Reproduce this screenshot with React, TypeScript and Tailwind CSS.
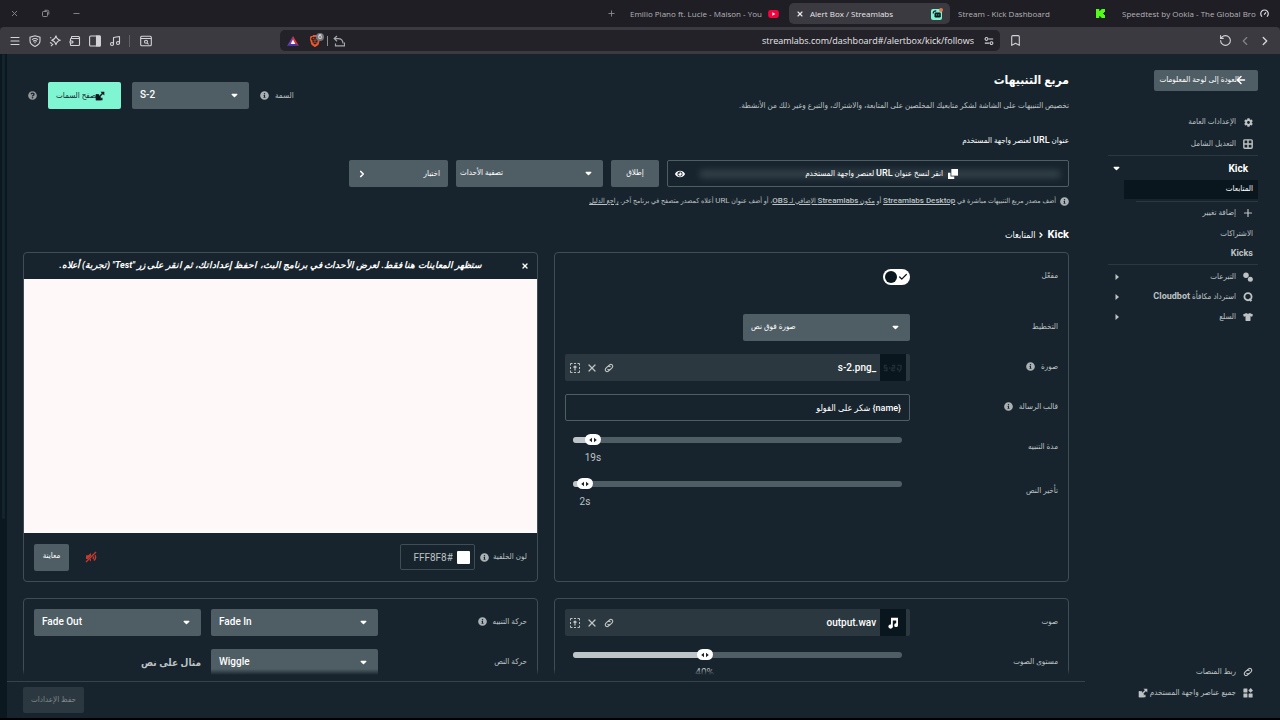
import React, { useState } from "react";
import {
  ArrowLeft, Bookmark, Check, ChevronLeft, ChevronRight, Menu, Minus, Music,
  Plus, RotateCcw, Wallet, X,
} from "lucide-react";
import { FaCog, FaEye, FaInfoCircle, FaQuestionCircle, FaTshirt } from "react-icons/fa";
import { SiBrave } from "react-icons/si";

type SvgProps = { className?: string };

const Caret = ({ className = "" }: SvgProps) => (
  <svg viewBox="0 0 8 6" aria-hidden="true" className={`h-[5px] w-[7px] ${className}`} fill="currentColor">
    <path d="M1 1h6a.6.6 0 0 1 .4 1L4.6 4.9a.8.8 0 0 1-1.2 0L.6 2A.6.6 0 0 1 1 1z" />
  </svg>
);

const External = ({ className = "" }: SvgProps) => (
  <svg viewBox="0 0 12 12" aria-hidden="true" className={className} fill="none" stroke="currentColor">
    <path d="M1 4h4v2.5h2V11H1z" fill="currentColor" stroke="none" />
    <path d="M1.8 4v6.2h6.4V8" strokeWidth="1.6" />
    <path d="M4.8 7.2 9.6 2.4" strokeWidth="1.8" />
    <path d="M6.5.8H11.2V5.5z" fill="currentColor" stroke="none" />
  </svg>
);

const LinkIcon = ({ className = "" }: SvgProps) => (
  <svg viewBox="0 0 24 24" aria-hidden="true" className={className} fill="none" stroke="currentColor" strokeWidth="2.8" strokeLinecap="round">
    <path d="M10.5 7.5 14 4a4.6 4.6 0 0 1 6.3 6.3l-4.8 4.8a4.4 4.4 0 0 1-6.2 0" />
    <path d="M13.5 16.5 10 20a4.6 4.6 0 0 1-6.3-6.3l4.8-4.8a4.4 4.4 0 0 1 6.2 0" />
  </svg>
);

const UploadIcon = () => (
  <svg viewBox="0 0 12 12" aria-hidden="true" className="size-3" fill="none" stroke="currentColor">
    <path d="M1.5 3.5v-2h2M5 1.500h2M8.500 1.500h2v2M10.500 5v2M10.500 8.500v2h-2M7 10.500H5M3.500 10.500h-2v-2M1.500 7V5" />
    <path d="M6 8.500V4M4.500 5.500 6 4l1.500 1.500" strokeWidth="1.2" />
  </svg>
);

const NoteIcon = () => (
  <svg viewBox="0 0 12 12" aria-hidden="true" className="size-3" fill="currentColor">
    <path d="M4 .8h7v7.4a1.9 1.9 0 1 1-1.8-1.9V3.6H5.8v6A1.9 1.9 0 1 1 4 7.7z" />
    <circle cx="3.4" cy="9.5" r="2" />
  </svg>
);

const GridIcon = () => (
  <svg viewBox="0 0 12 12" aria-hidden="true" className="size-[10px]" fill="none" stroke="currentColor" strokeWidth="1.7">
    <rect x="1" y="1" width="10" height="10" rx="1" />
    <path d="M6 1v10M1 6h10" />
  </svg>
);

const CoinsIcon = () => (
  <svg viewBox="0 0 12 12" aria-hidden="true" className="size-[10px]" fill="currentColor">
    <circle cx="3.6" cy="3.8" r="3.3" />
    <circle cx="8.8" cy="8.6" r="3" />
  </svg>
);

const BotIcon = () => (
  <svg viewBox="0 0 12 12" aria-hidden="true" className="size-[10px]" fill="none" stroke="currentColor" strokeWidth="2.2">
    <circle cx="6" cy="5.6" r="4.3" />
    <path d="M7.5 8 10 11" strokeWidth="2.6" />
  </svg>
);

const WidgetsIcon = () => (
  <svg viewBox="0 0 12 12" aria-hidden="true" className="size-[10px]" fill="currentColor">
    <rect x=".5" y=".5" width="4.8" height="4.8" rx=".6" />
    <path d="M9.2 0 12 2.9 9.2 5.8 6.4 2.9z" />
    <rect x=".5" y="6.7" width="4.8" height="4.8" rx=".6" />
    <rect x="6.7" y="6.7" width="4.8" height="4.8" rx=".6" />
  </svg>
);

const Info = () => <FaInfoCircle aria-hidden="true" className="size-[9px] shrink-0 text-[#a9b1b5]" />;

function Select({ label, options, className }: { label: string; options: string[]; className: string }) {
  return (
    <div dir="ltr" className={`grid h-[27px] items-center ${className}`}>
      <select
        aria-label={label}
        className="col-start-1 row-start-1 h-[27px] w-full appearance-none rounded-[2px] bg-[#4f5e65] pb-[2px] pl-2 pr-5 text-left text-[10px] font-medium text-white"
      >
        {options.map((o) => <option key={o}>{o}</option>)}
      </select>
      <Caret className="pointer-events-none col-start-1 row-start-1 mr-[11px] justify-self-end text-white" />
    </div>
  );
}

function Slider({ id, initial, max, unit }: { id: string; initial: number; max: number; unit: string }) {
  const [value, setValue] = useState(initial);
  const pct = (value / max) * 100;
  return (
    <div dir="ltr" className="h-[31px] px-2">
      <div className="relative flex h-[11px] items-center">
        <div className="h-[6px] w-full overflow-hidden rounded-full bg-[#4f5e65]">
          <div className="h-full bg-[#bdc5c8]" style={{ width: `${pct}%` }} />
        </div>
        <span className="absolute flex h-[11px] w-4 -translate-x-1/2 items-center justify-center rounded-full bg-white text-[#17242d]" style={{ left: `${pct}%` }}>
          <svg viewBox="0 0 10 6" aria-hidden="true" className="h-[6px] w-[10px]" fill="currentColor">
            <path d="M4 .8v4.4L1.2 3zM6 .8v4.4L8.8 3z" />
          </svg>
        </span>
        <input id={id} type="range" min={0} max={max} value={value} onChange={(e) => setValue(Number(e.target.value))} className="absolute inset-0 w-full opacity-0" />
      </div>
      <div className="relative h-5">
        <output htmlFor={id} className="absolute top-[6px] -translate-x-1/2 text-[10px] leading-[14px] text-[#bdc2c4]" style={{ left: `${pct}%` }}>{value}{unit}</output>
      </div>
    </div>
  );
}

function Row({ label, htmlFor, info, children, className = "min-h-[27px]" }: { label: string; htmlFor?: string; info?: boolean; children: React.ReactNode; className?: string }) {
  return (
    <div className={`flex items-start ${className}`}>
      <div className="flex h-[25px] w-[30%] items-center gap-[6px] text-[8px] text-[#bdc2c4]">
        <label htmlFor={htmlFor}>{label}</label>
        {info && <Info />}
      </div>
      <div className="w-[70%]">{children}</div>
    </div>
  );
}

function FileField({ name, children }: { name: string; children: React.ReactNode }) {
  return (
    <div className="flex h-[27px] items-center rounded-[2px] bg-[#2b383f] pr-1">
      <span className="flex h-full w-[26px] items-center justify-center bg-[#09161d] text-white">{children}</span>
      <span className="mr-1 flex-1 text-[10px] font-medium text-white">{name}</span>
      <div className="flex items-center gap-[5px] pl-1 text-[#bdc2c4]">
        <button aria-label="رابط" className="p-px"><LinkIcon className="size-[10px]" /></button>
        <button aria-label="إزالة"><X className="size-3" strokeWidth={2.4} /></button>
        <button aria-label="رفع"><UploadIcon /></button>
      </div>
    </div>
  );
}

function NavItem({ icon, children, arrow, className = "h-5" }: { icon: React.ReactNode; children: React.ReactNode; arrow?: boolean; className?: string }) {
  return (
    <a href="#" className={`flex items-center pr-1 text-[8px] text-[#bdc2c4] ${className}`}>
      <span className="flex w-3 justify-center">{icon}</span>
      <span className="mr-[6px] flex flex-1 items-center gap-[2px]">{children}</span>
      {arrow && (
        <svg viewBox="0 0 4 6" aria-hidden="true" className="ml-[7px] h-[6px] w-1" fill="currentColor"><path d="M.5 0 4 3 .5 6z" /></svg>
      )}
    </a>
  );
}

function BrowserChrome() {
  return (
    <header dir="ltr" className="shrink-0 bg-[#1f1e24] font-['Open_Sans','Noto_Sans',sans-serif]">
      <div className="flex h-[27px] items-center text-[8px] text-[#b4b3b8]">
        <div className="flex flex-1 items-center gap-[22px] pl-[10px] text-[#8b8a8f]">
          <button aria-label="Close"><X className="size-[9px]" strokeWidth={2.4} /></button>
          <button aria-label="Restore">
            <svg viewBox="0 0 9 9" className="size-[9px]" fill="none" stroke="currentColor"><rect x="1.5" y="2.5" width="5" height="5" rx=".8" /><path d="M3.500 1.300h3a1.300 1.300 0 0 1 1.300 1.300v3" /></svg>
          </button>
          <button aria-label="Minimize"><Minus className="size-[9px]" strokeWidth={2.4} /></button>
        </div>
        <button aria-label="New tab" className="mr-[14px] text-[#8b8a8f]"><Plus className="size-[9px]" strokeWidth={2.4} /></button>
        <div className="mr-[10px] flex w-[149px] items-center">
          <span className="w-[131px] whitespace-nowrap">Emilio Piano ft. Lucie - Maison - You</span>
          <svg viewBox="0 0 12 9" aria-hidden="true" className="ml-[7px] h-2 w-[11px] shrink-0"><rect width="12" height="9" rx="2.4" fill="#f4033d" /><path d="M4.700 2.500v4l3.400-2z" fill="#fff" /></svg>
        </div>
        <div className="flex h-[21px] w-[161px] items-center rounded-[5px] bg-[#3b3a40] px-[7px] text-[#e8e7ea]">
          <button aria-label="Close tab"><X className="size-[8px]" strokeWidth={3.5} /></button>
          <span className="ml-[6px] flex-1 whitespace-nowrap">Alert Box / Streamlabs</span>
          <svg viewBox="0 0 12 12" aria-hidden="true" className="size-3"><rect y="1" width="11" height="11" rx="2" fill="#80f5d2" /><path d="M2.200 5.500c0-2 1.200-2.700 3-2.700" fill="none" stroke="#09161d" strokeWidth="1.2" /><rect x="3.5" y="4.5" width="6.3" height="5" rx="1.2" fill="#09161d" /><path d="M5.700 6.300v1.200M7.800 6.300v1.200" stroke="#80f5d2" strokeWidth=".8" /><circle cx="10" cy="2" r="2" fill="#e0784f" /></svg>
        </div>
        <div className="flex w-[164px] items-center pl-2">
          <span className="flex-1 whitespace-nowrap">Stream - Kick Dashboard</span>
          <svg viewBox="0 0 9 9" aria-hidden="true" className="mr-[9px] size-[9px]" fill="#53fc18"><path d="M0 0h3.300v2h1V1h1V0H9v3H8v1H7v1h1v1h1v3H5.300V8h-1V7h-1v2H0z" /></svg>
        </div>
        <div className="flex w-[166px] items-center pl-2">
          <span className="w-[131px] whitespace-nowrap">Speedtest by Ookla - The Global Bro</span>
          <svg viewBox="0 0 12 12" aria-hidden="true" className="ml-[7px] size-[9px] shrink-0" fill="none" stroke="#dcdce5" strokeWidth="1.6"><path d="M2.800 10.200a5 5 0 1 1 6.400 0M5.500 7.500 8 4.500" /></svg>
        </div>
      </div>
      <div className="flex h-[27px] items-center rounded-t-[4px] bg-[#3b3a40] pl-[9px] pr-2 text-[#d4d3d8]">
        <div className="flex w-[271px] items-center gap-[8px]">
          <button aria-label="Menu"><Menu className="size-3" strokeWidth={2.2} /></button>
          <button aria-label="VPN">
            <svg viewBox="0 0 12 12" className="size-3" fill="none" stroke="currentColor" strokeWidth="1.1"><path d="M6 .7 11 2.200v3.600c0 2.700-2.600 4.700-5 5.600-2.400-.9-5-2.900-5-5.600V2.200z" /><path d="M3 4.600c1.800-1.300 4.200-1.300 6 0M4.100 6.200c1.200-.8 2.600-.8 3.800 0M5.300 7.700h1.400" /></svg>
          </button>
          <button aria-label="Leo">
            <svg viewBox="0 0 12 12" className="size-3" fill="none" stroke="currentColor" strokeWidth="1.1" strokeLinejoin="round"><path d="M7 .8c.5 2.700 1.500 3.700 4.300 4.400C8.500 6 7.500 7 7 9.700 6.400 7 5.400 6 2.700 5.200 5.400 4.500 6.400 3.500 7 .8zM1 7.500l2 1M2 11l2.200-2.200M1.200 2.500 2.300 3" /></svg>
          </button>
          <button aria-label="Wallet"><Wallet className="size-3 -scale-x-100" strokeWidth={2.2} /></button>
          <button aria-label="Sidebar">
            <svg viewBox="0 0 12 12" className="size-3" fill="none" stroke="currentColor" strokeWidth="1.1"><rect x=".6" y="1" width="10.8" height="10" rx="1" /><path d="M7.500 1H11v10H7.500z" fill="currentColor" /></svg>
          </button>
          <button aria-label="Playlist"><Music className="size-3" strokeWidth={2.2} /></button>
          <span className="h-3 w-px bg-[#626167]" />
          <button aria-label="Search tabs" className="ml-[2px]">
            <svg viewBox="0 0 12 12" className="size-3" fill="none" stroke="currentColor" strokeWidth="1.1"><rect x=".7" y="1.2" width="10.6" height="9.6" rx="1" /><path d="M.7 3.500h10.600M7.300 8.100l1.300 1.200" /><circle cx="6" cy="6.7" r="1.5" /></svg>
          </button>
        </div>
        <div className="flex h-[21px] w-[720px] items-center rounded-[5px] bg-[#232228] pl-[7px] pr-[6px]">
          <svg viewBox="0 0 12 10" aria-hidden="true" className="h-[10px] w-3"><path d="M6 0 0 10l6-3z" fill="#7b3ca8" /><path d="M6 0l6 10-6-3z" fill="#e0352b" /><path d="M0 10h12L6 6z" fill="#4338a8" /><path d="M6 3.600 8.300 8H3.700z" fill="#fff" /></svg>
          <div className="relative ml-[10px]">
            <SiBrave aria-hidden="true" className="size-3 text-[#f1562b]" />
            <span className="absolute -right-[3px] -top-[2px] flex size-[8px] items-center justify-center rounded-full bg-[#77767c] text-[7px] leading-none text-white">6</span>
          </div>
          <span className="ml-[6px] h-[10px] w-px bg-[#8b8a90]" />
          <svg viewBox="0 0 12 12" aria-hidden="true" className="ml-[5px] size-3" fill="none" stroke="#a8a7ac" strokeWidth="1.2"><path d="M4 1 1.200 3.600 4 6.200M1.200 3.600H5c3 0 5 2 5 5M2.500 8.500v2.300h9V7.500" /></svg>
          <input aria-label="Address" defaultValue="streamlabs.com/dashboard#/alertbox/kick/follows" className="h-4 min-w-0 flex-1 bg-transparent pb-px pr-[10px] text-right text-[9px] text-[#e8e7ea] outline-none" />
          <svg viewBox="0 0 12 12" aria-hidden="true" className="size-[10px]" fill="none" stroke="currentColor" strokeWidth="1.3"><circle cx="3" cy="3.5" r="1.7" /><circle cx="9" cy="8.5" r="1.7" /><path d="M5.500 3.500H11M1 8.500h5.500" /></svg>
        </div>
        <button aria-label="Bookmark" className="ml-[9px]"><Bookmark className="size-[13px]" strokeWidth={2} /></button>
        <div className="ml-auto flex items-center gap-[6px]">
          <button aria-label="Reload"><RotateCcw className="size-[13px]" strokeWidth={2} /></button>
          <button aria-label="Back" className="text-[#85848a]"><ChevronLeft className="size-[14px]" strokeWidth={2} /></button>
          <button aria-label="Forward"><ChevronRight className="size-[14px]" strokeWidth={2.4} /></button>
        </div>
      </div>
    </header>
  );
}

function Sidebar() {
  return (
    <aside className="flex w-[195px] shrink-0 flex-col pb-[15px] pl-[23px] pr-[22px] pt-4">
      <button className="flex h-[21px] items-center self-start whitespace-nowrap rounded-[2px] bg-[#4f5e65] pb-px pl-[6px] pr-[11px] text-[8px] font-medium text-white">
        <ArrowLeft className="-ml-1 size-3" strokeWidth={3} />
        العودة إلى لوحة المعلومات
      </button>
      <nav className="mt-5">
        <NavItem className="h-[22px]" icon={<FaCog className="size-[9px]" />}>الإعدادات العامة</NavItem>
        <NavItem className="h-[22px]" icon={<GridIcon />}>التعديل الشامل</NavItem>
        <div className="border-t border-[#2b383f]">
          <a href="#" className="flex h-6 items-center justify-between pl-[5px] pr-[10px] text-[10px] font-bold text-white">Kick<Caret /></a>
          <a href="#" className="mr-0 ml-4 flex h-[19px] items-center bg-[#09161d] pb-px pr-[5px] text-[8px] font-medium text-white">المتابعات</a>
          <div className="ml-7 mt-[2px] border-t border-[#2b383f]" />
          <NavItem className="h-[22px]" icon={<Plus className="size-3" strokeWidth={2.4} />}>إضافة تغيير</NavItem>
          <a href="#" className="flex h-5 items-center pr-[5px] text-[8px] text-[#bdc2c4]">الاشتراكات</a>
          <a href="#" className="flex h-5 items-center pr-[5px] text-[9px] font-bold text-[#bdc2c4]">Kicks</a>
        </div>
        <div className="border-t border-[#2b383f] pt-[2px]">
          <NavItem arrow icon={<CoinsIcon />}>التبرعات</NavItem>
          <NavItem arrow icon={<BotIcon />}><span>استرداد مكافأة <span className="text-[9px] font-bold">Cloudbot</span></span></NavItem>
          <NavItem arrow icon={<FaTshirt className="size-[10px]" />}>السلع</NavItem>
        </div>
      </nav>
      <nav className="mt-auto">
        <NavItem className="h-[21px]" icon={<LinkIcon className="size-[10px]" />}>ربط المنصات</NavItem>
        <NavItem className="h-[21px]" icon={<WidgetsIcon />}>جميع عناصر واجهة المستخدم<External className="size-[10px]" /></NavItem>
      </nav>
    </aside>
  );
}

export default function App() {
  const [enabled, setEnabled] = useState(true);
  return (
    <div className="flex h-screen flex-col overflow-hidden bg-black pb-[2px]">
      <BrowserChrome />
      <div dir="rtl" className="flex min-h-0 flex-1 bg-[#17242d] font-[Roboto,'DejaVu_Sans_Condensed','DejaVu_Sans',sans-serif] text-[#bdc2c4]">
        <Sidebar />
        <main className="flex min-w-0 flex-1 flex-col">
          <div className="relative min-h-0 flex-1 overflow-hidden px-4 pt-[14px]">
            <div className="flex items-start justify-between">
              <div>
                <h1 className="text-[12px] font-bold leading-6 text-white">مربع التنبيهات</h1>
                <p className="mt-[6px] text-[8px] leading-4">تخصيص التنبيهات على الشاشة لشكر متابعيك المخلصين على المتابعة، والاشتراك، والتبرع وغير ذلك من الأنشطة.</p>
              </div>
              <div className="mt-[14px] flex items-center pl-[5px]">
                <span className="text-[8px]">السمة</span>
                <span className="mr-[6px]"><Info /></span>
                <Select label="السمة" options={["S-2"]} className="mr-[11px] w-[117px]" />
                <button className="mr-[11px] flex h-[27px] w-[73px] items-center justify-end rounded-[2px] bg-[#80f5d2] pl-2 text-[8px] text-[#17242d]">
                  <External className="-ml-[3px] size-[10px] shrink-0 text-[#09161d]" />
                  <span className="whitespace-nowrap">تصفح السمات</span>
                </button>
                <FaQuestionCircle aria-hidden="true" className="mr-[11px] size-[9px] text-[#91979a]" />
              </div>
            </div>

            <h2 className="mt-[18px] text-[8px] font-medium leading-4 text-white">عنوان <span className="text-[9px]">URL</span> لعنصر واجهة المستخدم</h2>
            <div className="mt-[11px] flex h-[27px] gap-2">
              <div className="relative flex w-[402px] items-center rounded-[2px] border border-[#4f5e65] text-[8px] font-medium text-white">
                <span className="absolute left-8 right-2 h-2 bg-[#46545b] opacity-60 blur-[3px]" />
                <button className="relative flex flex-1 items-center gap-[5px] pr-[110px]">
                  <svg viewBox="0 0 12 12" aria-hidden="true" className="size-[10px]" fill="currentColor"><path d="M0 4.500h3V9h4.500v3H0z" /><path d="M4 0h8v8H4z" /></svg>
                  <span>انقر لنسخ عنوان <span className="text-[9px]">URL</span> لعنصر واجهة المستخدم</span>
                </button>
                <button aria-label="إظهار" className="ml-[7px]"><FaEye className="size-[10px]" /></button>
              </div>
              <button className="w-12 rounded-[2px] bg-[#4f5e65] pb-[2px] text-[8px] font-medium text-white">إطلاق</button>
              <Select label="تصفية الأحداث" options={["تصفية الأحداث"]} className="w-[147px] [&>select]:pl-1 [&>select]:text-[8px]" />
              <button className="flex w-[99px] items-center justify-between rounded-[2px] bg-[#4f5e65] px-2 text-[8px] font-medium text-white">
                اختبار
                <ChevronRight className="size-[10px]" strokeWidth={4} />
              </button>
            </div>
            <p className="mt-[6px] flex items-center gap-1 text-[7px] leading-4">
              <Info />
              <span className="whitespace-nowrap">
                أضف مصدر مربع التنبيهات مباشرة في <a href="#" className="text-[8px] font-medium underline">Streamlabs Desktop</a> أو <a href="#" className="font-medium underline">مكون <span className="text-[8px]">Streamlabs</span> الإضافي لـ <span className="text-[8px]">OBS</span></a>، أو أضف عنوان <span className="text-[8px]">URL</span> أعلاه كمصدر متصفح في برنامج آخر. <a href="#" className="underline">راجع الدليل</a>
              </span>
            </p>
            <h3 className="mt-[18px] flex items-center gap-[2px] text-[11px] font-bold leading-4 text-white">
              Kick <ChevronRight className="size-2" strokeWidth={4} /><span className="text-[9px] font-normal">المتابعات</span>
            </h3>

            <div className="mt-[9px] grid grid-cols-2 gap-4">
              <section className="flex flex-col gap-[13px] rounded-[4px] border border-[#3f4d54] p-[10px]">
                <Row label="مفعّل" htmlFor="enabled" className="h-[38px]">
                  <label className="flex h-[27px] w-fit cursor-pointer items-center">
                    <input id="enabled" type="checkbox" checked={enabled} onChange={(e) => setEnabled(e.target.checked)} className="sr-only" />
                    <span className="flex h-4 w-[27px] items-center justify-between rounded-full bg-white px-[2px] text-[#09161d]">
                      <Check className="size-[10px]" strokeWidth={3} />
                      <span className="size-3 rounded-full bg-[#09161d]" />
                    </span>
                  </label>
                </Row>
                <Row label="التخطيط"><Select label="التخطيط" options={["صورة فوق نص"]} className="w-[167px] [&>select]:text-[8px]" /></Row>
                <Row label="صورة" info>
                  <FileField name="_s-2.png">
                    <svg viewBox="0 0 20 10" aria-hidden="true" className="h-[10px] w-5" fill="none" stroke="#1f2d35" strokeWidth="1.5"><path d="M4 2.500H1.500V5H4v2.500H1M6 5h1.500M9 2.500h2.500V5H9v2.500h3M14.500 2.500H18V6l-2 3M14.500 4.500v2H16" /></svg>
                  </FileField>
                </Row>
                <Row label="قالب الرسالة" info htmlFor="template">
                  <input id="template" defaultValue="{name} شكر على الفولو" className="block h-[27px] w-full rounded-[2px] border border-[#4f5e65] bg-transparent px-2 text-[9px] font-medium text-white outline-none" />
                </Row>
                <Row label="مدة التنبيه" htmlFor="duration" className="h-[31px]"><Slider id="duration" initial={19} max={315} unit="s" /></Row>
                <Row label="تأخير النص" htmlFor="delay" className="h-[31px]"><Slider id="delay" initial={2} max={55} unit="s" /></Row>
              </section>

              <section className="flex flex-col overflow-hidden rounded-[4px] border border-[#3f4d54]">
                <div className="flex h-[26px] items-center px-2 font-[Roboto,'DejaVu_Sans',sans-serif] text-[9px] font-bold italic text-white">
                  <button aria-label="إغلاق"><X className="size-2" strokeWidth={4} /></button>
                  <p className="flex-1 whitespace-nowrap pr-3 text-center">ستظهر المعاينات هنا فقط. لعرض الأحداث في برنامج البث، احفظ إعداداتك، ثم انقر على زر "Test" (تجربة) أعلاه.</p>
                </div>
                <div className="h-[254px] bg-[#fff8f8]" />
                <div className="flex h-12 items-center px-[10px]">
                  <label htmlFor="bg-color" className="text-[8px]">لون الخلفية</label>
                  <span className="mr-1"><Info /></span>
                  <div className="mr-[5px] flex h-[26px] w-[75px] items-center gap-1 rounded-[2px] border border-[#3f4d54] px-1">
                    <span className="size-[13px] shrink-0 rounded-[1px] bg-white" />
                    <input id="bg-color" defaultValue="#FFF8F8" className="w-full min-w-0 bg-transparent text-[10px] outline-none" />
                  </div>
                  <button aria-label="كتم" className="mr-auto text-[#c23a30]">
                    <svg viewBox="0 0 12 12" className="size-3" fill="currentColor"><path d="M1 4.200h2.200L6 2v3L2.800 8H1zM6 7.500V10.500L4.300 9z" /><path d="M1 11 11 1M8.200 5.500c.5.900.4 1.700-.4 2.500M10 4.200c1 1.600.7 3.600-1 5.300" fill="none" stroke="currentColor" strokeWidth="1.4" /></svg>
                  </button>
                  <button className="mr-4 h-[27px] w-[35px] rounded-[2px] bg-[#4f5e65] pb-[2px] text-[8px] font-medium text-white">معاينة</button>
                </div>
              </section>

              <section className="flex flex-col gap-[13px] rounded-[4px] border border-[#3f4d54] p-[10px]">
                <Row label="صوت"><FileField name="output.wav"><NoteIcon /></FileField></Row>
                <Row label="مستوى الصوت" htmlFor="volume" className="h-[31px]"><Slider id="volume" initial={40} max={100} unit="%" /></Row>
              </section>

              <section className="flex flex-col gap-[13px] rounded-[4px] border border-[#3f4d54] p-[10px]">
                <Row label="حركة التنبيه" info>
                  <div className="flex justify-end gap-[10px]">
                    <Select label="Fade In" options={["Fade In"]} className="w-[167px]" />
                    <Select label="Fade Out" options={["Fade Out"]} className="w-[167px]" />
                  </div>
                </Row>
                <Row label="حركة النص">
                  <div className="flex items-center justify-end gap-[10px]">
                    <Select label="حركة النص" options={["Wiggle"]} className="w-[167px]" />
                    <span className="w-[167px] text-[10px] font-bold leading-4">مثال على نص</span>
                  </div>
                </Row>
              </section>
            </div>
            <div className="pointer-events-none absolute inset-x-0 bottom-0 h-3 bg-linear-to-t from-[#17242d] from-50% to-transparent" />
          </div>
          <footer className="flex h-[37px] shrink-0 items-center justify-end border-t border-[#36434b] px-4">
            <button disabled className="h-[26px] w-[61px] rounded-[2px] bg-[#2b383f] text-[8px] text-[#7e888c]">حفظ الإعدادات</button>
          </footer>
        </main>
        <div className="w-[7px] shrink-0 bg-[#0b1820] px-[2px]"><div className="h-[70%] rounded-full bg-[#14242d]" /></div>
      </div>
    </div>
  );
}
